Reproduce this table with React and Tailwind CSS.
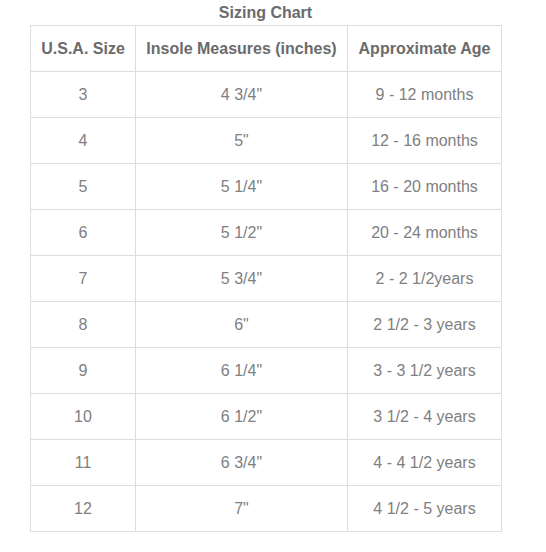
import React from 'react';

const rows = [
  ['3', '4 3/4"', '9 - 12 months'],
  ['4', '5"', '12 - 16 months'],
  ['5', '5 1/4"', '16 - 20 months'],
  ['6', '5 1/2"', '20 - 24 months'],
  ['7', '5 3/4"', '2 - 2 1/2years'],
  ['8', '6"', '2 1/2 - 3 years'],
  ['9', '6 1/4"', '3 - 3 1/2 years'],
  ['10', '6 1/2"', '3 1/2 - 4 years'],
  ['11', '6 3/4"', '4 - 4 1/2 years'],
  ['12', '7"', '4 1/2 - 5 years'],
];

export default function App() {
  return (
    <div className="w-[546px] h-[552px] bg-white font-['Liberation_Sans',Arial,sans-serif]">
      {/* 标题 */}
      <div className="pl-[30px] w-[501px] h-[25px] flex items-center justify-center text-[16px] font-bold text-[#6b6b6b]">
        Sizing Chart
      </div>
      <table className="ml-[30px] border-collapse table-fixed w-[471px] text-[16px]">
        <colgroup>
          <col className="w-[105px]" />
          <col className="w-[212px]" />
          <col className="w-[154px]" />
        </colgroup>
        <thead>
          <tr className="h-[46px]">
            <th className="border border-[#ddd] font-bold text-[#6b6b6b] text-center">U.S.A. Size</th>
            <th className="border border-[#ddd] font-bold text-[#6b6b6b] text-center">Insole Measures (inches)</th>
            <th className="border border-[#ddd] font-bold text-[#6b6b6b] text-center">Approximate Age</th>
          </tr>
        </thead>
        <tbody>
          {rows.map((r) => (
            <tr key={r[0]} className="h-[46px]">
              {r.map((c, i) => (
                <td key={i} className="border border-[#ddd] text-[#808080] text-center">{c}</td>
              ))}
            </tr>
          ))}
        </tbody>
      </table>
    </div>
  );
}
